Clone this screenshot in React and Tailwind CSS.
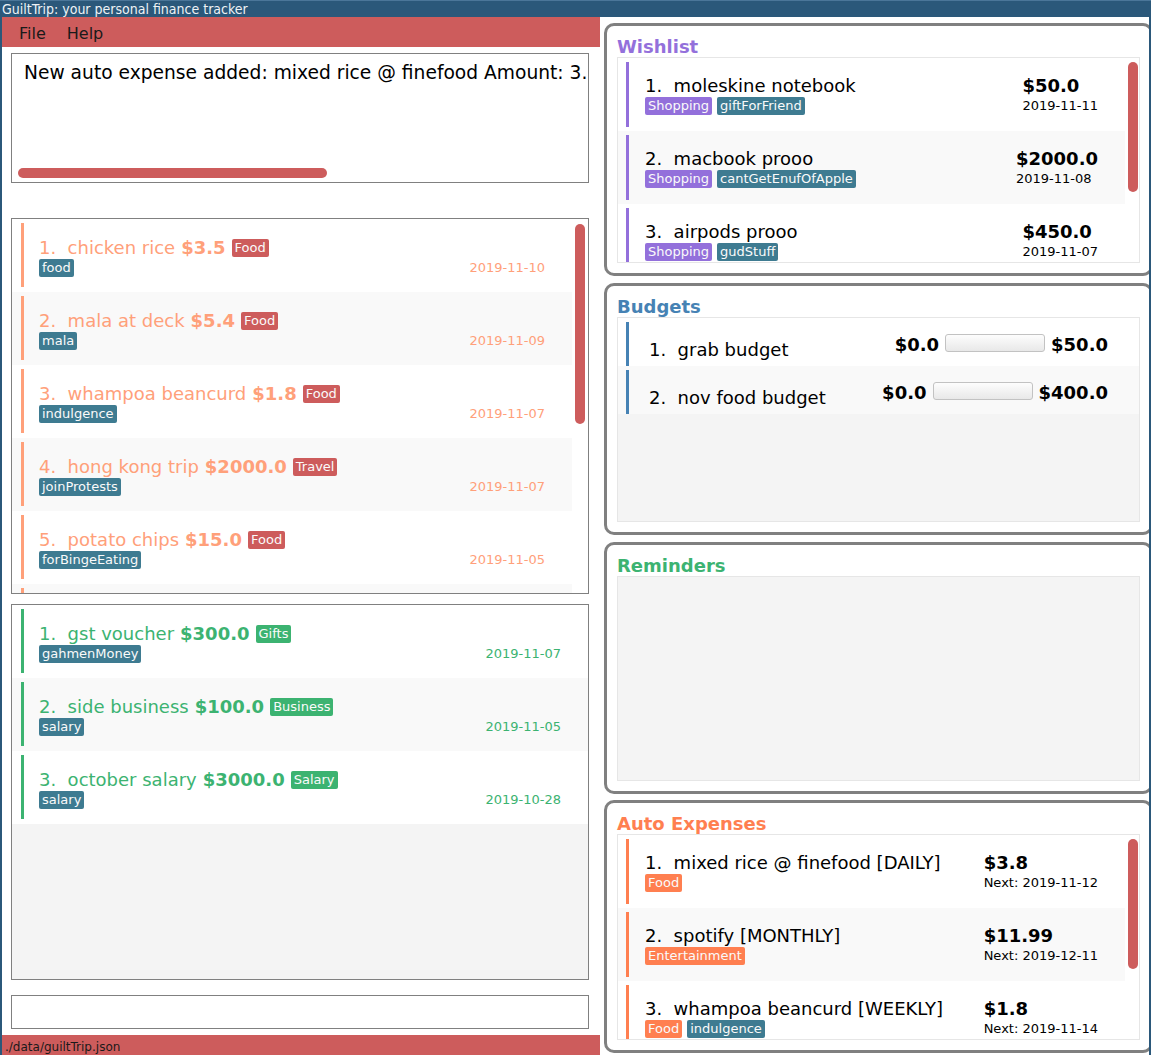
import React from 'react';

const EXPENSES = [
  { name: 'chicken rice', amount: '$3.5', cat: 'Food', tags: ['food'], date: '2019-11-10' },
  { name: 'mala at deck', amount: '$5.4', cat: 'Food', tags: ['mala'], date: '2019-11-09' },
  { name: 'whampoa beancurd', amount: '$1.8', cat: 'Food', tags: ['indulgence'], date: '2019-11-07' },
  { name: 'hong kong trip', amount: '$2000.0', cat: 'Travel', tags: ['joinProtests'], date: '2019-11-07' },
  { name: 'potato chips', amount: '$15.0', cat: 'Food', tags: ['forBingeEating'], date: '2019-11-05' },
  null,
];

const INCOMES = [
  { name: 'gst voucher', amount: '$300.0', cat: 'Gifts', tags: ['gahmenMoney'], date: '2019-11-07' },
  { name: 'side business', amount: '$100.0', cat: 'Business', tags: ['salary'], date: '2019-11-05' },
  { name: 'october salary', amount: '$3000.0', cat: 'Salary', tags: ['salary'], date: '2019-10-28' },
];

const WISHES = [
  { name: 'moleskine notebook', amount: '$50.0', date: '2019-11-11', tags: [['Shopping', 'bg-[#9370db]'], ['giftForFriend', 'bg-[#3e7b91]']] },
  { name: 'macbook prooo', amount: '$2000.0', date: '2019-11-08', tags: [['Shopping', 'bg-[#9370db]'], ['cantGetEnufOfApple', 'bg-[#3e7b91]']] },
  { name: 'airpods prooo', amount: '$450.0', date: '2019-11-07', tags: [['Shopping', 'bg-[#9370db]'], ['gudStuff', 'bg-[#3e7b91]']] },
];

const AUTOS = [
  { name: 'mixed rice @ finefood [DAILY]', amount: '$3.8', date: 'Next: 2019-11-12', tags: [['Food', 'bg-[#ff7f50]']] },
  { name: 'spotify [MONTHLY]', amount: '$11.99', date: 'Next: 2019-12-11', tags: [['Entertainment', 'bg-[#ff7f50]']] },
  { name: 'whampoa beancurd [WEEKLY]', amount: '$1.8', date: 'Next: 2019-11-14', tags: [['Food', 'bg-[#ff7f50]'], ['indulgence', 'bg-[#3e7b91]']] },
];

const BUDGETS = [
  { name: 'grab budget', spent: '$0.0', total: '$50.0' },
  { name: 'nov food budget', spent: '$0.0', total: '$400.0' },
];

function Tag({ children, color }) {
  return (
    <span className={`h-[18px] leading-[18px] px-[3px] rounded-[2px] text-[13px] text-[#fafafa] whitespace-nowrap ${color}`}>
      {children}
    </span>
  );
}

// ============================================================
// LEFT SIDE LISTS
// ============================================================
function EntryCell({ item, index, income }) {
  const bg = index % 2 ? 'bg-[#f9f9f9]' : 'bg-white';
  const bar = income ? 'border-[#3cb371]' : 'border-[#ffa07a]';
  const text = income ? 'text-[#3cb371]' : 'text-[#ffa07a]';
  const catColor = income ? 'bg-[#3cb371]' : 'bg-[#cd5c5c]';
  return (
    <div className={`h-[73px] shrink-0 pt-[4px] pl-[9px] ${bg}`}>
      <div className={`h-[64px] border-l-[3px] ${bar} pl-[15px] pr-[27px] pt-[14px] ${text}`}>
        {item && (
          <>
            <div className="flex items-center gap-[6px] h-[21px] text-[18px] leading-[21px] whitespace-nowrap">
              <span className="whitespace-pre">{`${index + 1}.  ${item.name}`}</span>
              <span className="font-bold">{item.amount}</span>
              <Tag color={catColor}>{item.cat}</Tag>
            </div>
            <div className="flex items-center justify-between h-[18px] mt-[1px]">
              <div className="flex gap-[5px]">
                {item.tags.map(t => <Tag key={t} color="bg-[#3e7b91]">{t}</Tag>)}
              </div>
              <span className="text-[13px] leading-[18px]">{item.date}</span>
            </div>
          </>
        )}
      </div>
    </div>
  );
}

function LeftPane() {
  return (
    <div className="w-[598px] shrink-0 bg-white flex flex-col">
      {/* Menu bar */}
      <div className="h-[30px] bg-[#cd5c5c] flex items-center gap-[21px] pl-[17px] pt-[2px] text-[16px] leading-[19px] text-[#1a1a1a]">
        <span>File</span>
        <span>Help</span>
      </div>

      {/* Result display */}
      <div className="mt-[6px] ml-[9px] w-[578px] h-[130px] border border-[#808080] flex flex-col justify-between overflow-hidden">
        <div className="pt-[8px] pl-[12px] text-[18.67px] leading-[22px] text-black whitespace-nowrap overflow-hidden">
          New auto expense added: mixed rice @ finefood Amount: 3.8
        </div>
        <div className="ml-[6px] mb-[4px] w-[309px] h-[10px] rounded-[5px] bg-[#cd5c5c]" />
      </div>

      {/* Expense list */}
      <div className="mt-[35px] ml-[9px] w-[578px] h-[376px] border border-[#808080] bg-white flex overflow-hidden">
        <div className="w-[560px] flex flex-col overflow-hidden">
          {EXPENSES.map((e, i) => <EntryCell key={i} item={e} index={i} />)}
        </div>
        <div className="flex-1">
          <div className="w-[10px] ml-[3px] mt-[5px] h-[200px] rounded-[5px] bg-[#cd5c5c]" />
        </div>
      </div>

      {/* Income list */}
      <div className="mt-[10px] ml-[9px] w-[578px] h-[376px] border border-[#808080] bg-[#f4f4f4] flex flex-col overflow-hidden">
        {INCOMES.map((e, i) => <EntryCell key={i} item={e} index={i} income />)}
      </div>

      {/* Command box */}
      <div className="mt-[15px] ml-[9px] w-[578px] h-[34px] border border-[#808080] bg-white" />

      {/* Status bar */}
      <div className="mt-[6px] h-[20px] bg-[#cd5c5c] pl-[3px] pt-[2px] text-[12px] leading-[20px] text-[#1a1a1a] overflow-hidden">
        ./data/guiltTrip.json
      </div>
    </div>
  );
}

// ============================================================
// RIGHT SIDE PANELS
// ============================================================
function Panel({ title, color, className, children }) {
  return (
    <div className={`w-[549px] shrink-0 border-[3px] border-[#808080] rounded-[10px] px-[10px] pt-[10px] pb-[10px] flex flex-col bg-white ${className}`}>
      <div className={`h-[21px] text-[18px] leading-[21px] font-bold ${color}`}>{title}</div>
      <div className="flex-1 min-h-0 border border-[#e6e6e6] bg-[#f4f4f4] overflow-hidden">
        {children}
      </div>
    </div>
  );
}

function ItemCell({ item, index, barColor }) {
  const bg = index % 2 ? 'bg-[#f9f9f9]' : 'bg-white';
  return (
    <div className={`h-[73px] shrink-0 pt-[4px] pl-[8px] ${bg}`}>
      <div className={`h-[65px] border-l-[3px] ${barColor} pl-[16px] pr-[27px] pt-[13px] flex justify-between text-black`}>
        <div className="flex flex-col">
          <div className="h-[21px] text-[18px] leading-[21px] whitespace-pre">{`${index + 1}.  ${item.name}`}</div>
          <div className="flex gap-[5px] h-[18px] mt-[1px]">
            {item.tags.map(([t, c]) => <Tag key={t} color={c}>{t}</Tag>)}
          </div>
        </div>
        <div className="flex flex-col items-start">
          <div className="h-[21px] text-[18px] leading-[21px] font-bold">{item.amount}</div>
          <div className="h-[18px] mt-[1px] text-[13px] leading-[18px]">{item.date}</div>
        </div>
      </div>
    </div>
  );
}

function ScrollList({ items, barColor }) {
  return (
    <div className="h-full flex bg-white">
      <div className="w-[507px] flex flex-col overflow-hidden">
        {items.map((it, i) => <ItemCell key={i} item={it} index={i} barColor={barColor} />)}
      </div>
      <div className="flex-1">
        <div className="w-[10px] ml-[3px] mt-[4px] h-[130px] rounded-[5px] bg-[#cd5c5c]" />
      </div>
    </div>
  );
}

function BudgetCell({ item, index }) {
  const bg = index % 2 ? 'bg-[#f9f9f9]' : 'bg-white';
  return (
    <div className={`h-[48px] pt-[4px] pl-[8px] ${bg}`}>
      <div className="h-[44px] border-l-[3px] border-[#4682b4] pl-[20px] pr-[31px] flex justify-between items-start text-black text-[18px] leading-[21px]">
        <div className="mt-[17px] whitespace-pre">{`${index + 1}.  ${item.name}`}</div>
        <div className="mt-[12px] flex items-start gap-[6px] font-bold">
          <span>{item.spent}</span>
          <div className="w-[100px] h-[18px] rounded-[3px] border border-[#c2c2c2] bg-linear-to-b from-[#fdfdfd] to-[#e8e8e8]" />
          <span>{item.total}</span>
        </div>
      </div>
    </div>
  );
}

function RightPane() {
  return (
    <div className="flex-1 min-w-0 bg-white overflow-hidden pl-[4px] pt-[6px] flex flex-col">
      <Panel title="Wishlist" color="text-[#9370db]" className="h-[253px]">
        <ScrollList items={WISHES} barColor="border-[#9370db]" />
      </Panel>
      <Panel title="Budgets" color="text-[#4682b4]" className="h-[252px] mt-[7px]">
        {BUDGETS.map((b, i) => <BudgetCell key={i} item={b} index={i} />)}
      </Panel>
      <Panel title="Reminders" color="text-[#3cb371]" className="h-[252px] mt-[7px]" />
      <Panel title="Auto Expenses" color="text-[#ff7f50]" className="h-[253px] mt-[6px]">
        <ScrollList items={AUTOS} barColor="border-[#ff7f50]" />
      </Panel>
    </div>
  );
}

export default function App() {
  return (
    <div className="w-[1151px] h-[1055px] bg-[#2b587a] flex flex-col overflow-hidden font-['DejaVu_Sans',sans-serif]">
      <div className="h-[17px] shrink-0 border-t border-[#4b7699] pl-[2px] text-[14px] leading-[16px] text-[#eef2f5] font-['DejaVu_Sans_Condensed','DejaVu_Sans',sans-serif] whitespace-nowrap">
        GuiltTrip: your personal finance tracker
      </div>
      <div className="flex-1 min-h-0 flex mx-[2px]">
        <LeftPane />
        <RightPane />
      </div>
    </div>
  );
}
